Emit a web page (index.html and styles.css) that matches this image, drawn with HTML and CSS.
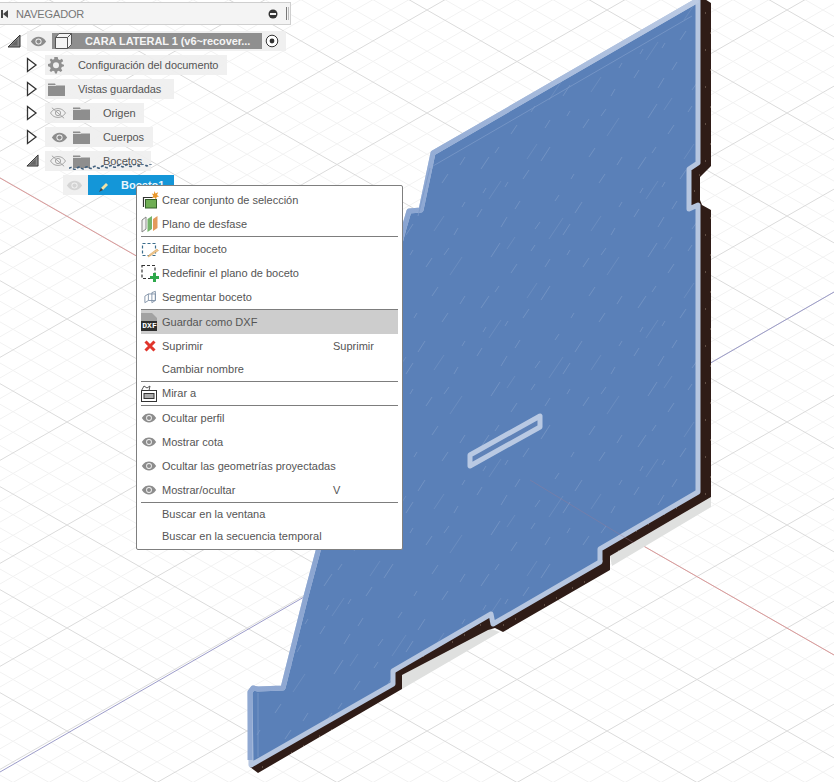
FILE: index.html
```html
<!DOCTYPE html>
<html lang="es">
<head>
<meta charset="utf-8">
<title>Navegador</title>
<link rel="stylesheet" href="styles.css">
</head>
<body>
<main class="viewport">
  <svg class="scene" width="834" height="782" viewBox="0 0 834 782" aria-hidden="true">
    <defs>
      <pattern id="grid" patternUnits="userSpaceOnUse" x="67" y="10" width="180" height="103">
        <path class="minor" d="M0 20.6L180 123.6M0 41.2L180 144.2M0 61.8L180 164.8M0 82.4L180 185.4M0 -20.6L180 82.4M0 -41.2L180 61.8M0 -61.8L180 41.2M0 -82.4L180 20.6M0 20.6L180 -82.4M0 41.2L180 -61.8M0 61.8L180 -41.2M0 82.4L180 -20.6M0 123.6L180 20.6M0 144.2L180 41.2M0 164.8L180 61.8M0 185.4L180 82.4"/>
        <path class="major" d="M0 0L180 103M0 103L180 0"/>
      </pattern>
      <pattern id="streaks" patternUnits="userSpaceOnUse" width="157" height="139">
        <rect width="157" height="139" fill="#5a80b8"/>
        <path class="streak" d="M10 30l8 -12M44 70l5 -8M70 22l9 -14M92 96l7 -11M128 44l6 -9M20 118l9 -14M60 112l4 -6M112 128l6 -9M140 96l4 -7M34 48l3 -5M100 40l3 -5M6 78l5 -8M24 14l4 -6M52 40l6 -9M84 62l4 -6M118 18l6 -9M146 26l5 -8M30 88l6 -10M74 128l5 -8M104 74l7 -11M130 116l5 -7M12 54l3 -5M64 90l5 -7M148 68l3 -5M40 134l6 -9M96 116l3 -5"/>
        <path class="streak-soft" d="M18 60l12 -18M56 20l10 -15M78 100l14 -21M120 92l10 -15M136 136l12 -18M36 110l8 -12"/>
      </pattern>
      <pattern id="speck" patternUnits="userSpaceOnUse" width="23" height="37">
        <rect width="23" height="37" fill="#2f1c17"/>
        <path class="speck" d="M4 6h1M15 13h1M9 27h1M20 33h1"/>
      </pattern>
      <linearGradient id="edge" gradientUnits="userSpaceOnUse" x1="250" y1="700" x2="700" y2="0">
        <stop offset="0" stop-color="#8fa8d2"/>
        <stop offset=".55" stop-color="#86a2d0"/>
        <stop offset="1" stop-color="#bccbe4"/>
      </linearGradient>
      <symbol id="eye" viewBox="0 0 20 12">
        <path d="M1 6C4 1.500 7 .5 10 .5S16 1.500 19 6C16 10.500 13 11.500 10 11.500S4 10.500 1 6Z" fill="currentColor"/>
        <circle cx="10" cy="6" r="3.600" fill="#f2f2f2"/>
        <circle cx="10" cy="6" r="2.500" fill="currentColor"/>
      </symbol>
      <symbol id="eye-off" viewBox="0 0 20 16">
        <path d="M1.500 8C4 4 7 3 10 3S16 4 18.500 8C16 12 13 13 10 13S4 12 1.500 8Z" fill="none" stroke="currentColor"/>
        <circle cx="10" cy="8" r="3" fill="none" stroke="currentColor"/>
        <path d="M3 2L17 14" stroke="currentColor" fill="none"/>
      </symbol>
      <symbol id="folder" viewBox="0 0 17 14">
        <path d="M0 1.500H7L8 3.500H17V14H0Z" fill="currentColor"/>
        <path d="M0 3.500H8" stroke="#f2f2f2" stroke-width=".8"/>
      </symbol>
      <symbol id="open" viewBox="0 0 12 16">
        <path d="M1.500 1.500L10 8L1.500 14.500Z" fill="#fff" stroke="#333" stroke-width="1.300"/>
      </symbol>
      <symbol id="closed" viewBox="0 0 14 14">
        <path d="M13 1V13H1Z" fill="#8a8a8a" stroke="#333"/>
        <path d="M10.500 5V11.500H4Z" fill="#666"/>
      </symbol>
    </defs>
    <rect width="834" height="782" fill="#fff"/>
    <rect width="834" height="782" fill="url(#grid)"/>
    <path class="axis-red" d="M0 178L834 655"/>
    <path class="axis-blue" d="M0 772L834 292"/>
    <path class="shadow" d="M711 497V507L612 566L610 556ZM402 675L488 628L500 632L402 689Z"/>
    <path fill="url(#speck)" d="M700 -4L711 3V166L700 177V200L702 205L711 210V497L610 556V570L503 632L495 628L488 630L402 675V689L258 773L250 767Z"/>
    <path class="plate" d="M698 -4V163L689 169V209L698 205V492L600 549V562L493 624L491 614L393 671V684L251 765L250 692L253 688L258 689L283 688L305 600L404 228L409 211L421 210L433 153L698 0Z"/>
    <path class="plate-edge" d="M250 760V692L253 688L258 689L283 688L305 600L404 228L409 211L421 210L433 153L698 0"/>
    <path class="plate-inner" d="M258 693V757M433 166L692 16M418 216L430 168"/>
    <path class="plate-axis" d="M530 480L634 543"/>
    <path class="slot" d="M470 455L540 416V427L470 466Z"/>
  </svg>

  <nav class="browser">
    <header class="browser-head">
      <svg class="head-skip" width="8" height="8" viewBox="0 0 8 8" aria-hidden="true"><path d="M0 0H2V8H0ZM7 0V8L2 4Z"/></svg>
      <span class="head-title">NAVEGADOR</span>
      <svg class="head-minus" width="10" height="10" viewBox="0 0 10 10" aria-hidden="true"><circle cx="5" cy="5" r="4.500"/><rect x="2" y="4" width="6" height="2"/></svg>
      <span class="head-grip"></span>
    </header>
    <ul class="tree">
      <li class="row row-root">
        <svg class="twist" width="14" height="14" aria-hidden="true"><use href="#closed"/></svg>
        <div class="pill pill-root">
          <svg class="eye" width="17" height="11" aria-hidden="true"><use href="#eye"/></svg>
          <div class="root-bar">
            <svg class="cube" width="17" height="16" viewBox="0 0 17 16" aria-hidden="true">
              <path d="M.5 4.500L4 .5H16.500V11.500L12.500 15.500H.5Z" fill="#f4f4f4" stroke="#555"/>
              <path d="M.5 4.500H12.500V15.500M12.500 4.500L16.500 .5" fill="none" stroke="#555"/>
            </svg>
            <span class="root-name">CARA LATERAL 1 (v6~recover...</span>
          </div>
          <svg class="radio" width="14" height="14" viewBox="0 0 14 14" aria-hidden="true"><circle cx="7" cy="7" r="5.800"/><circle class="radio-dot" cx="7" cy="7" r="2.400"/></svg>
        </div>
      </li>
      <li class="row">
        <svg class="twist-open" width="12" height="16" aria-hidden="true"><use href="#open"/></svg>
        <div class="pill">
          <svg class="icon-grey" width="18" height="18" viewBox="0 0 18 18" aria-hidden="true"><path d="M7.300 1H10.700L11.200 3.200L12.900 3.900L14.800 2.700L15.300 3.200L16.200 5.300L14.300 6.500L14.700 8.100L17 8.700V10.300L14.800 11L14.100 12.600L15.300 14.500L13.700 16L11.800 14.700L10.400 15.300L9.900 17.500H8L7.400 15.300L5.900 14.700L4 16L2.500 14.500L3.700 12.600L3.100 11L1 10.300V8L3.200 7.500L3.900 5.900L2.700 4L4 2.600L5.900 3.800L7.200 3.100Z M9 6.200A3 3 0 1 0 9 12.200A3 3 0 1 0 9 6.200Z" fill-rule="evenodd"/></svg>
          <span class="label label-first">Configuración del documento</span>
        </div>
      </li>
      <li class="row">
        <svg class="twist-open" width="12" height="16" aria-hidden="true"><use href="#open"/></svg>
        <div class="pill pill-wide">
          <svg class="folder" width="17" height="14" aria-hidden="true"><use href="#folder"/></svg>
          <span class="label label-first">Vistas guardadas</span>
        </div>
      </li>
      <li class="row">
        <svg class="twist-open" width="12" height="16" aria-hidden="true"><use href="#open"/></svg>
        <div class="pill">
          <svg class="eye-off" width="18" height="14" aria-hidden="true"><use href="#eye-off"/></svg>
          <svg class="folder folder-after" width="17" height="14" aria-hidden="true"><use href="#folder"/></svg>
          <span class="label label-second">Origen</span>
        </div>
      </li>
      <li class="row">
        <svg class="twist-open" width="12" height="16" aria-hidden="true"><use href="#open"/></svg>
        <div class="pill">
          <svg class="eye" width="17" height="11" aria-hidden="true"><use href="#eye"/></svg>
          <svg class="folder folder-after" width="17" height="14" aria-hidden="true"><use href="#folder"/></svg>
          <span class="label label-second">Cuerpos</span>
        </div>
      </li>
      <li class="row">
        <svg class="twist-closed" width="13" height="13" aria-hidden="true"><use href="#closed"/></svg>
        <div class="pill">
          <svg class="eye-off" width="18" height="14" aria-hidden="true"><use href="#eye-off"/></svg>
          <svg class="folder folder-after" width="17" height="14" aria-hidden="true"><use href="#folder"/></svg>
          <span class="label label-second">Bocetos</span>
        </div>
      </li>
      <li class="row row-sketch">
        <div class="pill pill-sketch">
          <svg class="eye eye-faint" width="17" height="11" aria-hidden="true"><use href="#eye"/></svg>
          <div class="sketch-bar">
            <svg class="pencil" width="10" height="10" viewBox="0 0 10 10" aria-hidden="true"><path class="pencil-body" d="M7 1L9 3L4 8L2 6Z"/><path class="pencil-tip" d="M2 6L4 8L0 10Z"/></svg>
            <span class="sketch-name">Boceto1</span>
          </div>
        </div>
      </li>
    </ul>
    <svg class="wavy" width="84" height="6" viewBox="0 0 84 6" aria-hidden="true"><path d="M0 4.500Q2 2.500 4 4.500T8 4.300T12 4T16 3.800T20 3.600T24 3.400T28 3.200T32 3T36 2.800T40 2.600T44 2.400T48 2.200T52 2T56 1.800T60 1.600T64 1.400T68 1.200T72 1T76 .9T80 .8T84 .7"/></svg>
  </nav>

  <section class="menu">
    <div class="item">
      <svg class="mi mi-18" width="18" height="18" viewBox="0 0 18 18" aria-hidden="true"><path d="M2.500 16V6.500H12" fill="none" stroke="#333" stroke-width="1.200"/><rect x="4.500" y="8.500" width="11" height="8.500" fill="#6fae54" stroke="#35602a"/><path d="M13.500 0L14.500 2.600L17.200 1.300L16 4L18 5.500L15.700 6L15 8.500L13.500 6.500L11 7L12.300 4.800L10.800 2.500L12.900 3Z" fill="#e9972a"/></svg>
      <span class="item-text">Crear conjunto de selección</span>
    </div>
    <div class="item">
      <svg class="mi mi-17" width="17" height="18" viewBox="0 0 17 18" aria-hidden="true"><path d="M1 5L5 2V14L1 17Z" fill="#f3f3f3" stroke="#888"/><path d="M6.500 4L11 1V14L6.500 17Z" fill="#74b36b"/><path d="M12 4L16.500 1V13L12 16Z" fill="#e39a5c"/></svg>
      <span class="item-text">Plano de desfase</span>
    </div>
    <hr class="sep">
    <div class="item">
      <svg class="mi mi-18" width="18" height="17" viewBox="0 0 18 17" aria-hidden="true"><rect x="1.500" y="2.500" width="13" height="12" class="dash"/><path d="M16 8L17.500 9.500L9 15L7 16L8 14Z" fill="#f0c58c" stroke="#d8a763" stroke-width=".6"/></svg>
      <span class="item-text">Editar boceto</span>
    </div>
    <div class="item">
      <svg class="mi mi-18" width="18" height="18" viewBox="0 0 18 18" aria-hidden="true"><rect x="1" y="1.500" width="13" height="13" class="dash dash-dark"/><path d="M12 9H15V12H18V15H15V18H12V15H9V12H12Z" fill="#2ea84b"/></svg>
      <span class="item-text">Redefinir el plano de boceto</span>
    </div>
    <div class="item">
      <svg class="mi mi-seg" width="14" height="14" viewBox="0 0 16 14" aria-hidden="true"><path d="M1 6L5 3.500H13V11H5L1 13.500ZM5 3.500V11M9 2L13 .5V11L9 13.500Z" fill="none" stroke="#7c8ea3"/></svg>
      <span class="item-text">Segmentar boceto</span>
    </div>
    <hr class="sep sep-hot">
    <div class="item item-hot">
      <svg class="mi mi-16" width="16" height="18" viewBox="0 0 16 18" aria-hidden="true"><path d="M0 0H11L16 5V8H0Z" fill="#a2a2a2"/><rect y="8" width="16" height="10" fill="#2e2e2e"/></svg>
      <span class="dxf-tag">DXF</span>
      <span class="item-text">Guardar como DXF</span>
    </div>
    <div class="item">
      <svg class="mi mi-x" width="12" height="12" viewBox="0 0 12 12" aria-hidden="true"><path d="M1.500 1.500L10.500 10.500M10.500 1.500L1.500 10.500"/></svg>
      <span class="item-text">Suprimir</span>
      <span class="shortcut">Suprimir</span>
    </div>
    <div class="item item-23">
      <span class="mi-blank"></span>
      <span class="item-text">Cambiar nombre</span>
    </div>
    <hr class="sep">
    <div class="item item-23">
      <svg class="mi mi-16" width="16" height="17" viewBox="0 0 16 17" aria-hidden="true"><rect x=".5" y="5.500" width="15" height="11" fill="none" stroke="#333"/><path d="M.5 5.500L3 1L6 3L9 1L8 5.500" fill="none" stroke="#555"/><rect x="3" y="8.500" width="10" height="5" fill="#aaa" stroke="#333"/></svg>
      <span class="item-text">Mirar a</span>
    </div>
    <hr class="sep">
    <div class="item">
      <svg class="mi mi-16 mi-eye" width="16" height="10" aria-hidden="true"><use href="#eye"/></svg>
      <span class="item-text">Ocultar perfil</span>
    </div>
    <div class="item">
      <svg class="mi mi-16 mi-eye" width="16" height="10" aria-hidden="true"><use href="#eye"/></svg>
      <span class="item-text">Mostrar cota</span>
    </div>
    <div class="item">
      <svg class="mi mi-16 mi-eye" width="16" height="10" aria-hidden="true"><use href="#eye"/></svg>
      <span class="item-text">Ocultar las geometrías proyectadas</span>
    </div>
    <div class="item">
      <svg class="mi mi-16 mi-eye" width="16" height="10" aria-hidden="true"><use href="#eye"/></svg>
      <span class="item-text">Mostrar/ocultar</span>
      <span class="shortcut">V</span>
    </div>
    <hr class="sep">
    <div class="item item-23">
      <span class="mi-blank"></span>
      <span class="item-text">Buscar en la ventana</span>
    </div>
    <div class="item item-22">
      <span class="mi-blank"></span>
      <span class="item-text">Buscar en la secuencia temporal</span>
    </div>
  </section>
</main>
</body>
</html>
```

FILE: styles.css
```css
* { box-sizing: border-box; }
html, body { margin: 0; padding: 0; background: #fff; }
body { font-family: "Liberation Sans", Arial, sans-serif; font-size: 11px; color: #555; }

.viewport { position: relative; width: 834px; height: 782px; overflow: hidden; }
.scene { position: absolute; inset: 0; display: block; }

.minor { stroke: #f2f2f2; stroke-width: 1; fill: none; }
.major { stroke: #dbdbdb; stroke-width: 1; fill: none; }
.axis-red { stroke: #dc9a9a; stroke-width: 1; fill: none; }
.axis-blue { stroke: #9d9dca; stroke-width: 1; fill: none; }
.shadow { fill: #dfe0df; }
.streak { stroke: #fff; stroke-opacity: .2; stroke-width: .7; fill: none; }
.streak-soft { stroke: #fff; stroke-opacity: .09; stroke-width: 1; fill: none; }
.speck { stroke: #cdbba6; stroke-opacity: .6; stroke-width: 1; fill: none; }
.plate { fill: url(#streaks); stroke: #b6c6e0; stroke-width: 5; stroke-linejoin: round; }
.plate-edge { fill: none; stroke: url(#edge); stroke-width: 5; stroke-linejoin: round; }
.plate-inner { stroke: #7a98c8; stroke-width: 1; fill: none; opacity: .8; }
.plate-axis { stroke: #a07a94; stroke-opacity: .35; stroke-width: 1; fill: none; }
.slot { fill: #5f82b8; stroke: #b9c9e3; stroke-width: 5; stroke-linejoin: round; }

/* Browser panel */
.browser { position: absolute; left: 0; top: 2px; width: 291px; }
.browser-head {
  display: flex; align-items: center; height: 23px; padding-left: 1px;
  background: #f4f4f4; border: 1px solid #cfcfcf; border-left: 0;
}
.head-skip { fill: #444; margin-right: 7px; }
.head-title { flex: 1; font-size: 11px; color: #777; letter-spacing: -.15px; }
.head-minus { fill: #333; margin-right: 8px; }
.head-minus rect { fill: #f4f4f4; }
.head-grip { width: 3px; height: 13px; margin-right: 1px; border-left: 1px solid #777; border-right: 1px solid #bbb; }

.tree { list-style: none; margin: 0; padding: 4px 0 0; }
.row { position: relative; display: flex; align-items: center; height: 24px; padding-left: 45px; }
.row-root { padding-left: 27px; }
.row-sketch { padding-left: 63px; }
.twist { position: absolute; left: 7px; top: 5px; }
.twist-open { position: absolute; left: 26px; top: 4px; }
.twist-closed { position: absolute; left: 26px; top: 5px; }

.pill { display: flex; align-items: center; height: 20px; padding: 0 9px 0 3px; background: rgba(238,238,238,.9); }
.pill-wide { padding-right: 13px; }
.pill-root { width: 259px; padding: 0; }
.pill-sketch { height: 20px; padding: 0; }

.eye { flex: none; color: #8c8c8c; margin-left: 3px; }
.eye-faint { color: #d4d4d4; margin-left: 3px; }
.eye-off { flex: none; color: #9a9a9a; margin-left: 1px; margin-right: -1px; }
.icon-grey { flex: none; fill: #909090; margin-left: -1px; }
.folder { flex: none; color: #8e8e8e; }
.folder-after { margin-left: 7px; }
.eye + .folder-after { margin-left: 5px; }
.label { white-space: nowrap; color: #555; letter-spacing: -.1px; line-height: 20px; }
.label-first { margin-left: 13px; }
.label-second { margin-left: 13px; }

.root-bar { display: flex; align-items: center; width: 210px; height: 16px; margin-left: 5px; background: #8f8f8f; }
.cube { flex: none; margin-left: 3px; }
.root-name { margin-left: 13px; color: #f5f5f5; font-weight: 700; letter-spacing: -.08px; white-space: nowrap; }
.radio { flex: none; margin-left: 3px; fill: #fff; stroke: #333; stroke-width: 1; }
.radio-dot { fill: #333; stroke: none; }

.sketch-bar { display: flex; align-items: center; width: 86px; height: 20px; margin-left: 5px; background: #1496d8; }
.pencil { flex: none; margin-left: 11px; margin-top: 3px; }
.pencil-body { fill: #f3e3a6; }
.pencil-tip { fill: #444; }
.sketch-name { margin-left: 12px; color: #e9f6fd; font-weight: 700; }

.wavy { position: absolute; left: 69px; top: 162px; }
.wavy path { stroke: #41607e; stroke-width: 1.600; stroke-dasharray: 3 1.500; fill: none; }

/* Context menu */
.menu {
  position: absolute; left: 136px; top: 185px; width: 267px; height: 365px;
  padding: 2px 4px 0;
  background: #fff; border: 1px solid #7f7f7f; border-radius: 2px;
}
.item { position: relative; display: flex; align-items: center; height: 24px; }
.item-23 { height: 23px; padding-bottom: 1px; }
.item-22 { height: 22px; padding-bottom: 2px; }
.item-hot { background: #cdcdcd; }
.item-text { flex: none; width: 171px; white-space: nowrap; color: #555; }
.shortcut { flex: none; color: #555; }
.mi { flex: none; }
.mi-18 { margin-right: 3px; }
.mi-17 { margin-right: 4px; }
.mi-16 { margin-right: 5px; }
.mi-seg { margin-left: 3px; margin-right: 4px; }
.mi-blank { flex: none; width: 21px; }
.mi-x { margin-left: 3px; margin-right: 6px; }
.mi-x path { stroke: #e0352c; stroke-width: 3; fill: none; }
.mi-eye { color: #8c8c8c; }
.dxf-tag {
  position: absolute; left: 1px; top: 12px; width: 15px;
  font: 700 8px/8px "Liberation Mono", monospace; color: #fff; text-align: center;
}
.dash { fill: none; stroke: #3b6d8c; stroke-width: 1.200; stroke-dasharray: 3 2; }
.dash-dark { stroke: #333; }
.sep { height: 1px; margin: 0; border: 0; background: #7d7d7d; }
```
